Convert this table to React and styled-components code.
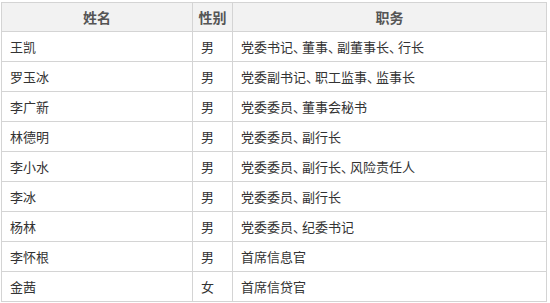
import React from "react";
import styled, { createGlobalStyle } from "styled-components";

const Global = createGlobalStyle`
  html, body { margin: 0; padding: 0; background: #fff; }
  body { font-family: "Noto Sans CJK SC", "Noto Sans", sans-serif; }
`;

const Wrap = styled.div`
  padding: 2px 0 0 1px;
`;

const Table = styled.table`
  border-collapse: collapse;
  width: 546px;
  table-layout: fixed;
  font-size: 13px;
  color: #333;
`;

const Th = styled.th`
  background: #f2f2f2;
  border: 1px solid #d4d4d4;
  height: 28px;
  padding: 0;
  font-weight: bold;
  color: #555;
  text-align: center;
  font-size: 14px;
`;

const Td = styled.td`
  border: 1px solid #d4d4d4;
  height: 29px;
  padding: 0 0 0 8px;
  text-align: left;
  vertical-align: middle;
`;

const Punct = styled.span`
  font-feature-settings: "palt";
  margin-right: 2.5px;
`;

function Duty({ text }) {
  const parts = text.split("、");
  return parts.map((p, i) => (
    <React.Fragment key={i}>
      {p}
      {i < parts.length - 1 && <Punct>、</Punct>}
    </React.Fragment>
  ));
}

const rows = [
  ["王凯", "男", "党委书记、董事、副董事长、行长"],
  ["罗玉冰", "男", "党委副书记、职工监事、监事长"],
  ["李广新", "男", "党委委员、董事会秘书"],
  ["林德明", "男", "党委委员、副行长"],
  ["李小水", "男", "党委委员、副行长、风险责任人"],
  ["李冰", "男", "党委委员、副行长"],
  ["杨林", "男", "党委委员、纪委书记"],
  ["李怀根", "男", "首席信息官"],
  ["金茜", "女", "首席信贷官"],
];

export default function App() {
  return (
    <>
      <Global />
      <Wrap>
        <Table>
          <colgroup>
            <col style={{ width: 191 }} />
            <col style={{ width: 40 }} />
            <col />
          </colgroup>
          <thead>
            <tr>
              <Th>姓名</Th>
              <Th>性别</Th>
              <Th>职务</Th>
            </tr>
          </thead>
          <tbody>
            {rows.map((r) => (
              <tr key={r[0]}>
                <Td>{r[0]}</Td>
                <Td>{r[1]}</Td>
                <Td>
                  <Duty text={r[2]} />
                </Td>
              </tr>
            ))}
          </tbody>
        </Table>
      </Wrap>
    </>
  );
}
